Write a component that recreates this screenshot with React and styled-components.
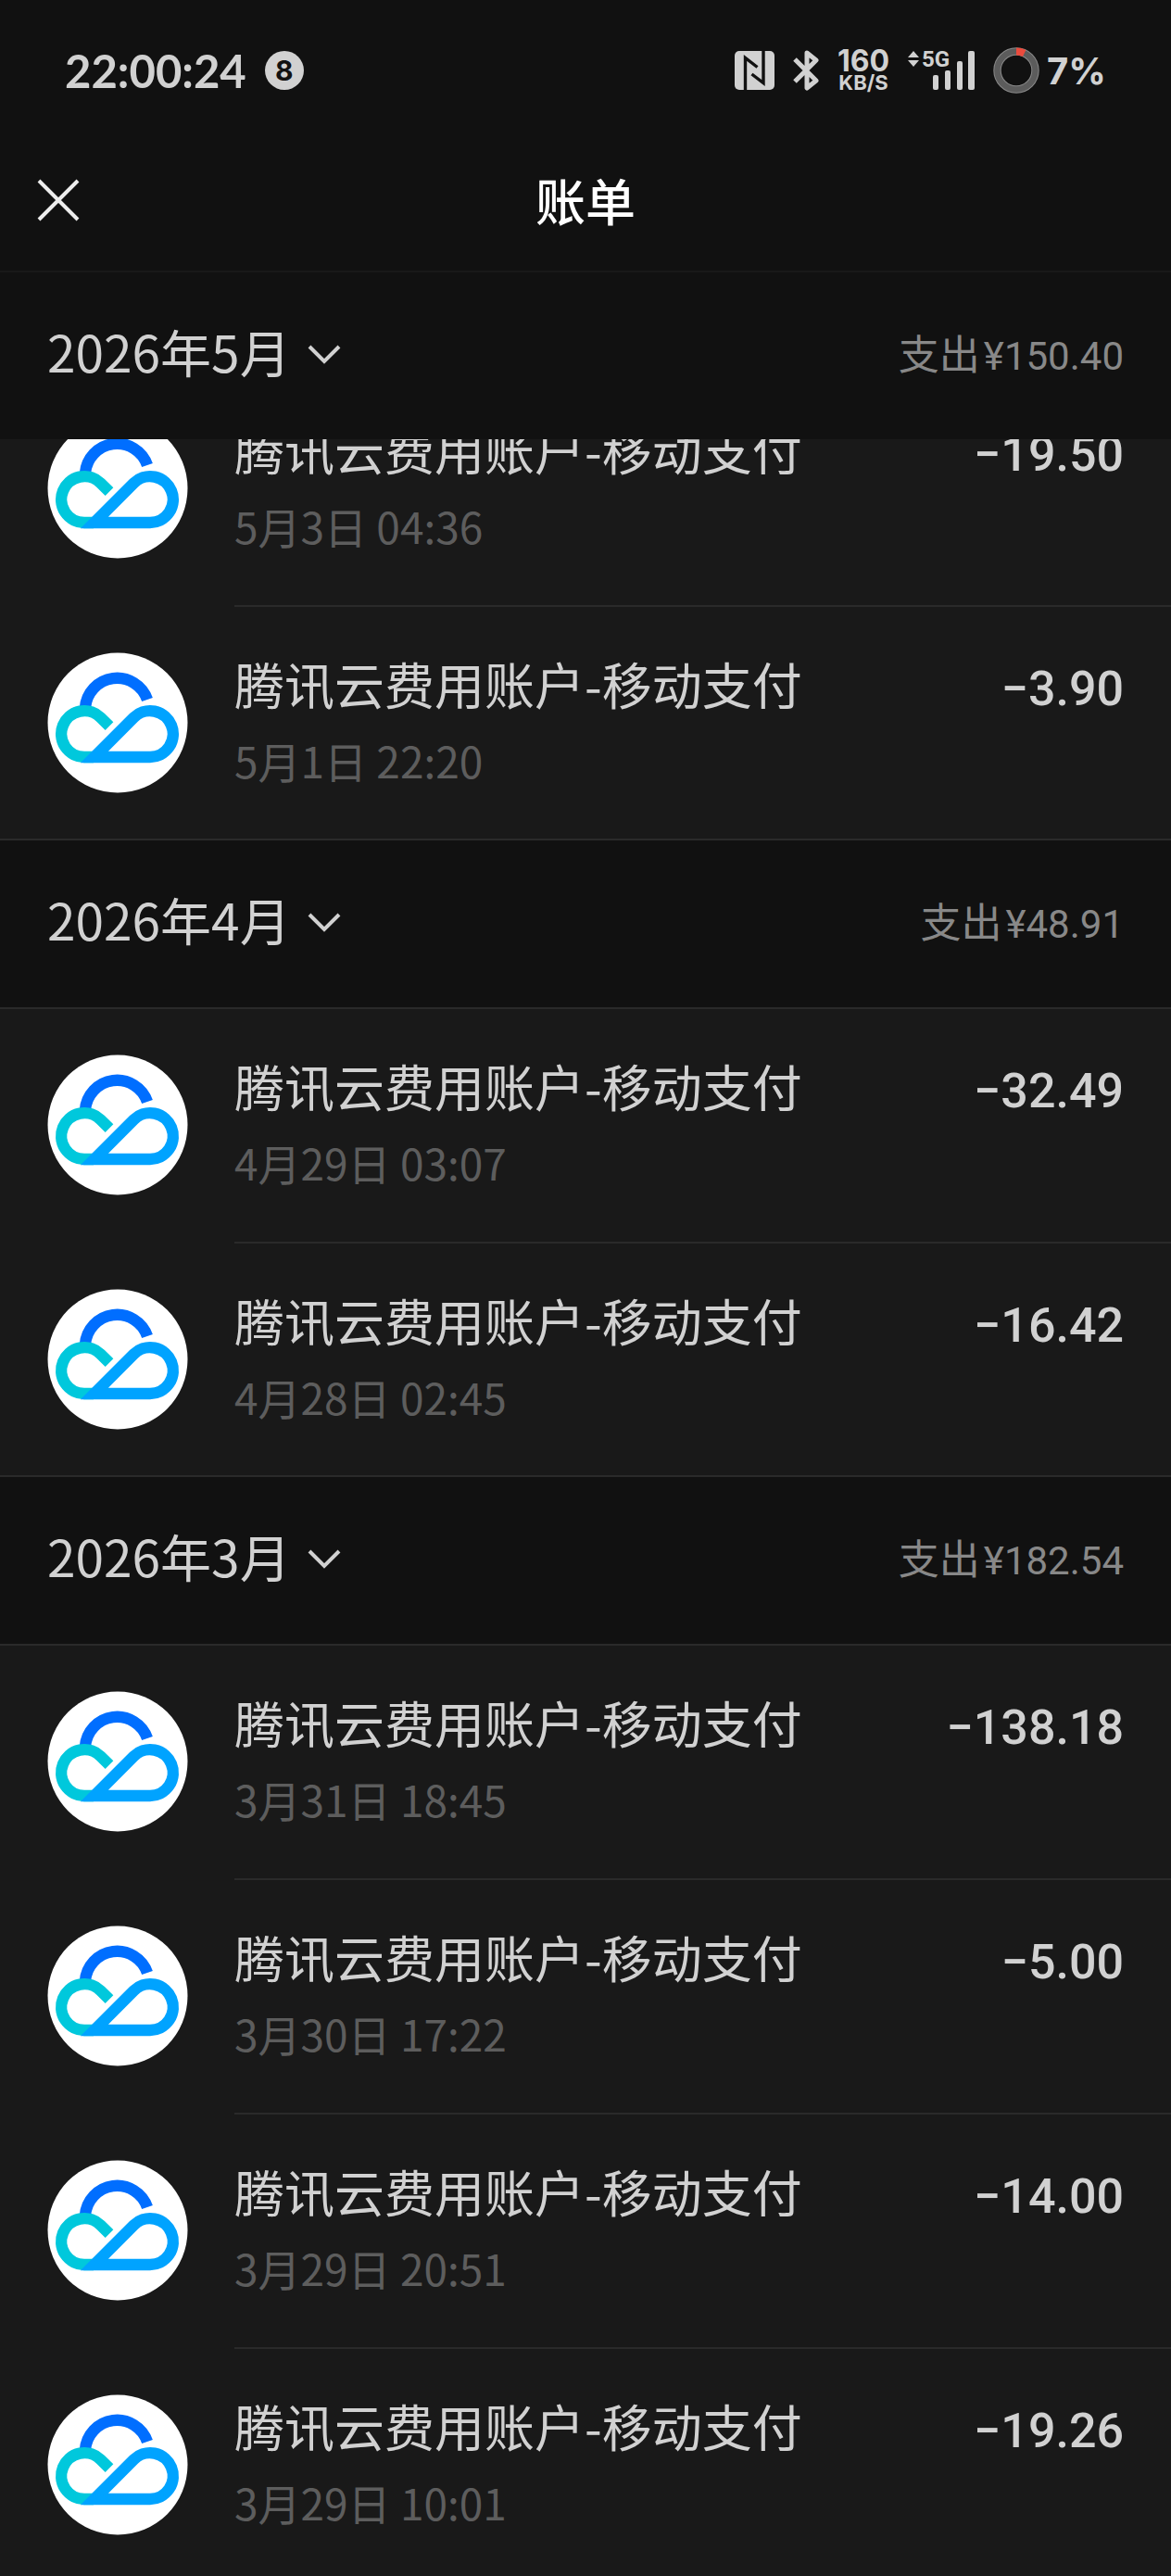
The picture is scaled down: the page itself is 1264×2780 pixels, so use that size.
import React from 'react';
import styled, { createGlobalStyle } from 'styled-components';

const GlobalStyle = createGlobalStyle`
  body {
    margin: 0;
    background-color: #191919;
    color: #d1d1d1;
    font-family: 'Noto Sans CJK SC', sans-serif;
  }
`;

const Page = styled.div`
  height: 100vh;
  display: flex;
  flex-direction: column;
  overflow: hidden;
`;

const StatusBar = styled.div`
  flex: none;
  display: flex;
  align-items: center;
  justify-content: space-between;
  height: 152px;
  padding: 0 70px;
  background-color: #111;
`;

const StatusGroup = styled.div`
  display: flex;
  align-items: center;
  gap: ${({ $gap }) => $gap}px;
`;

const Clock = styled.div`
  font-family: Lato, sans-serif;
  font-weight: 700;
  font-size: 49px;
`;

const Badge = styled.div`
  display: flex;
  align-items: center;
  justify-content: center;
  width: 42px;
  height: 42px;
  border-radius: 50%;
  background-color: #d1d1d1;
  color: #111;
  font-family: Inter, sans-serif;
  font-weight: 700;
  font-size: 30px;
`;

const Speed = styled.div`
  display: flex;
  flex-direction: column;
  align-items: center;
  font-family: Inter, sans-serif;
  font-weight: 700;
`;

const SpeedValue = styled.div`
  font-size: 32px;
  line-height: 26px;
`;

const SpeedUnit = styled.div`
  font-size: 22px;
  line-height: 20px;
`;

const Percent = styled.div`
  font-family: Inter, sans-serif;
  font-weight: 700;
  font-size: 40px;
`;

const NavBar = styled.header`
  flex: none;
  display: grid;
  grid-template-columns: 1fr auto 1fr;
  align-items: center;
  box-sizing: border-box;
  height: 142px;
  padding: 0 36px 12px;
  border-bottom: 2px solid #191919;
  background-color: #111;
`;

const IconButton = styled.button`
  display: flex;
  width: 54px;
  padding: 0;
  border: 0;
  background: none;
  color: #ededed;
`;

const Title = styled.h1`
  margin: 0;
  color: #fff;
  font-weight: 500;
  font-size: 54px;
  line-height: 72px;
`;

const List = styled.main`
  flex: 1;
  min-height: 0;
  overflow: hidden;
`;

const MonthHeader = styled.div`
  position: relative;
  display: flex;
  align-items: center;
  justify-content: space-between;
  height: 180px;
  padding: 0 51px;
  border-bottom: ${({ $pinned }) => ($pinned ? '0' : '2px')} solid #2a2a2a;
  background-color: #111;
`;

const MonthButton = styled.button`
  display: flex;
  align-items: center;
  gap: 18px;
  padding: 0 0 12px;
  border: 0;
  background: none;
  color: inherit;
  font: inherit;
  font-size: 55px;
  line-height: 72px;
`;

const Chevron = styled.svg`
  width: 36px;
  height: 22px;
  margin-top: 8px;
`;

const Expense = styled.div`
  display: flex;
  align-items: baseline;
  gap: 4px;
  padding-bottom: 4px;
  color: #888;
  font-size: 44px;
  line-height: 72px;
`;

const Total = styled.span`
  font-family: Roboto, sans-serif;
  font-size: 42px;
`;

// the first group is scrolled a little under its pinned month header
const Records = styled.ul`
  margin: ${({ $scrolled }) => ($scrolled ? '-72px' : '0')} 0 0;
  padding: 0;
  list-style: none;
`;

const Record = styled.li`
  display: flex;
  gap: 50px;
  height: 253px;
  padding-left: 51px;
  box-sizing: border-box;
  &:last-child {
    height: 252px;
    border-bottom: 2px solid #2a2a2a;
  }
`;

const Logo = styled.svg`
  flex: none;
  width: 152px;
  height: 152px;
  margin-top: 49px;
`;

const Body = styled.div`
  flex: 1;
  padding: 46px 51px 0 0;
  border-bottom: 2px solid #2a2a2a;
  ${Record}:last-child & {
    border-bottom: 0;
  }
`;

const Line = styled.div`
  display: flex;
  align-items: baseline;
  justify-content: space-between;
  font-size: 54px;
  line-height: 74px;
`;

const Amount = styled.span`
  font-family: Roboto, sans-serif;
  font-weight: 500;
  font-size: 52px;
  line-height: 1;
`;

const Time = styled.div`
  margin-top: 10px;
  color: #5d5d5d;
  font-size: 46px;
  line-height: 70px;
`;

const PAYEE = '腾讯云费用账户-移动支付';

const groups = [
  {
    month: '2026年5月',
    total: '150.40',
    pinned: true,
    records: [
      { time: '5月3日 04:36', amount: '19.50' },
      { time: '5月1日 22:20', amount: '3.90' },
    ],
  },
  {
    month: '2026年4月',
    total: '48.91',
    records: [
      { time: '4月29日 03:07', amount: '32.49' },
      { time: '4月28日 02:45', amount: '16.42' },
    ],
  },
  {
    month: '2026年3月',
    total: '182.54',
    records: [
      { time: '3月31日 18:45', amount: '138.18' },
      { time: '3月30日 17:22', amount: '5.00' },
      { time: '3月29日 20:51', amount: '14.00' },
      { time: '3月29日 10:01', amount: '19.26' },
    ],
  },
];

const NfcIcon = () => (
  <svg width="43" height="42" viewBox="0 0 43 42" aria-hidden="true">
    <rect width="43" height="42" rx="5" fill="#d1d1d1" />
    <path d="M11.5 42V7.5l13 10M31 0v34.5l-12.5-9.5" fill="none" stroke="#111" strokeWidth="3.4" />
  </svg>
);

const BluetoothIcon = () => (
  <svg width="28" height="44" viewBox="0 0 28 44" aria-hidden="true">
    <path
      d="M2 10l23 23-10 8V3l10 8L2 34"
      fill="none"
      stroke="#d1d1d1"
      strokeWidth="5"
      strokeLinejoin="round"
    />
  </svg>
);

const SignalIcon = () => (
  <svg width="72" height="60" viewBox="0 -8 72 60" role="img" aria-label="5G">
    <g fill="#d1d1d1">
      <path d="M0 8l6-7 6 7zM0 11h12l-6 7z" />
      <text x="15" y="18" fontFamily="Roboto, sans-serif" fontWeight="700" fontSize="24">
        5G
      </text>
      <rect x="27" y="27" width="6" height="16" rx="2" />
      <rect x="40" y="22" width="6" height="21" rx="2" />
      <rect x="53" y="12" width="6" height="31" rx="2" />
      <rect x="65" y="1" width="7" height="42" rx="2" />
    </g>
  </svg>
);

const BatteryIcon = () => (
  <svg width="50" height="50" viewBox="0 0 50 50" aria-hidden="true">
    <circle cx="25" cy="25" r="20.5" fill="none" stroke="#8a8a8a" strokeWidth="8.4" />
    <circle cx="25" cy="25" r="20.5" fill="none" stroke="#5c5c5c" strokeWidth="6.4" />
    <path d="M25 4.5a20.5 20.5 0 0 1 8.7 2" fill="none" stroke="#eb4b3d" strokeWidth="8" />
  </svg>
);

const CloseIcon = () => (
  <svg width="54" height="54" viewBox="0 0 54 54" aria-hidden="true">
    <path d="M6 6l42 42M48 6L6 48" stroke="currentColor" strokeWidth="4" />
  </svg>
);

const ChevronIcon = () => (
  <Chevron viewBox="0 0 36 22" aria-hidden="true">
    <path d="M2 3l16 16L34 3" fill="none" stroke="currentColor" strokeWidth="4" />
  </Chevron>
);

const CloudLogo = () => (
  <Logo viewBox="0 0 152 152" aria-hidden="true">
    <circle cx="76" cy="76" r="75.5" fill="#fff" />
    <g fill="none" strokeWidth="12.4">
      <path d="M41 60A34.5 34.5 0 0 1 108 51" stroke="#006eff" />
      <path d="M67 79.6L57.6 70.4A24.9 24.9 0 1 0 40 113H50" stroke="#00c8dc" />
      <path d="M50.8 113H111A24.9 24.9 0 1 0 93.4 70.4Z" stroke="#00a3ff" />
    </g>
  </Logo>
);

const App = () => (
  <Page>
    <GlobalStyle />
    <StatusBar>
      <StatusGroup $gap={20}>
        <Clock>22:00:24</Clock>
        <Badge>8</Badge>
      </StatusGroup>
      <StatusGroup $gap={20}>
        <NfcIcon />
        <BluetoothIcon />
        <Speed>
          <SpeedValue>160</SpeedValue>
          <SpeedUnit>KB/S</SpeedUnit>
        </Speed>
        <SignalIcon />
        <StatusGroup $gap={8}>
          <BatteryIcon />
          <Percent>7%</Percent>
        </StatusGroup>
      </StatusGroup>
    </StatusBar>
    <NavBar>
      <IconButton type="button" aria-label="关闭">
        <CloseIcon />
      </IconButton>
      <Title>账单</Title>
    </NavBar>
    <List>
      {groups.map(({ month, total, pinned, records }) => (
        <section key={month}>
          <MonthHeader $pinned={pinned}>
            <MonthButton type="button">
              {month}
              <ChevronIcon />
            </MonthButton>
            <Expense>
              支出
              <Total>{`¥${total}`}</Total>
            </Expense>
          </MonthHeader>
          <Records $scrolled={pinned}>
            {records.map(({ time, amount }) => (
              <Record key={time}>
                <CloudLogo />
                <Body>
                  <Line>
                    <span>{PAYEE}</span>
                    <Amount>{`−${amount}`}</Amount>
                  </Line>
                  <Time>{time}</Time>
                </Body>
              </Record>
            ))}
          </Records>
        </section>
      ))}
    </List>
  </Page>
);

export default App;
